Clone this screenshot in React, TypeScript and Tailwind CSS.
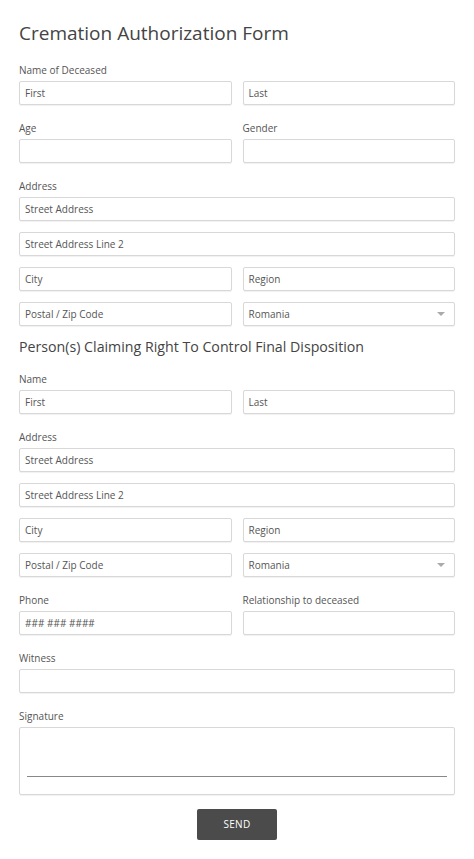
import React from "react";

const inputCls =
  "h-[24px] w-full rounded-[2px] border border-[#d8d8d8] bg-white px-[5px] text-[10px] leading-[22px] text-[#555] shadow-[0_1px_1px_rgba(0,0,0,0.06)] flex items-center";

function Box({ text, select }: { text?: string; select?: boolean }) {
  return (
    <div className={inputCls}>
      <span className="flex-1 truncate">{text}</span>
      {select && (
        <svg width="8" height="5" viewBox="0 0 8 5" className="mr-[4px]">
          <path d="M0 0 L8 0 L4 4 Z" fill="#aaa" />
        </svg>
      )}
    </div>
  );
}

function Label({ children }: { children: React.ReactNode }) {
  return <div className="mb-[4px] h-[14px] text-[10px] leading-[14px] text-[#555]">{children}</div>;
}

function Row({ a, b }: { a: React.ReactNode; b: React.ReactNode }) {
  return (
    <div className="grid grid-cols-2 gap-x-[11px]">
      <div>{a}</div>
      <div>{b}</div>
    </div>
  );
}

function AddressBlock() {
  return (
    <div>
      <Label>Address</Label>
      <div className="flex flex-col gap-[11px]">
        <Box text="Street Address" />
        <Box text="Street Address Line 2" />
        <Row a={<Box text="City" />} b={<Box text="Region" />} />
        <Row a={<Box text="Postal / Zip Code" />} b={<Box text="Romania" select />} />
      </div>
    </div>
  );
}

export default function App() {
  return (
    <div
      className="min-h-[859px] w-[474px] bg-white"
      style={{ fontFamily: '"Open Sans", "Noto Sans", sans-serif' }}
    >
      <div className="px-[19px] pt-[19px]">
        <h1 className="h-[28px] text-[19px] leading-[28px] font-normal text-[#444]">
          Cremation Authorization Form
        </h1>
        <div className="mt-[16px] flex flex-col gap-[16px]">
          <div>
            <Label>Name of Deceased</Label>
            <Row a={<Box text="First" />} b={<Box text="Last" />} />
          </div>
          <Row
            a={
              <div>
                <Label>Age</Label>
                <Box />
              </div>
            }
            b={
              <div>
                <Label>Gender</Label>
                <Box />
              </div>
            }
          />
          <AddressBlock />
        </div>
        <h2 className="mt-[10px] h-[22px] text-[14.2px] leading-[22px] font-normal text-[#444]">
          Person(s) Claiming Right To Control Final Disposition
        </h2>
        <div className="mt-[14px] flex flex-col gap-[16px]">
          <div>
            <Label>Name</Label>
            <Row a={<Box text="First" />} b={<Box text="Last" />} />
          </div>
          <AddressBlock />
          <Row
            a={
              <div>
                <Label>Phone</Label>
                <Box text="### ### ####" />
              </div>
            }
            b={
              <div>
                <Label>Relationship to deceased</Label>
                <Box />
              </div>
            }
          />
          <div>
            <Label>Witness</Label>
            <Box />
          </div>
          <div>
            <Label>Signature</Label>
            <div className="flex h-[68px] flex-col justify-end rounded-[2px] border border-[#d8d8d8] px-[7px] pb-[17px] shadow-[0_1px_1px_rgba(0,0,0,0.06)]">
              <div className="h-px bg-[#888]" />
            </div>
          </div>
        </div>
        <div className="mt-[14px] flex justify-center">
          <button className="h-[31px] w-[80px] rounded-[2px] bg-[#4b4b4b] text-[10px] tracking-[0.3px] text-white">
            SEND
          </button>
        </div>
      </div>
    </div>
  );
}
